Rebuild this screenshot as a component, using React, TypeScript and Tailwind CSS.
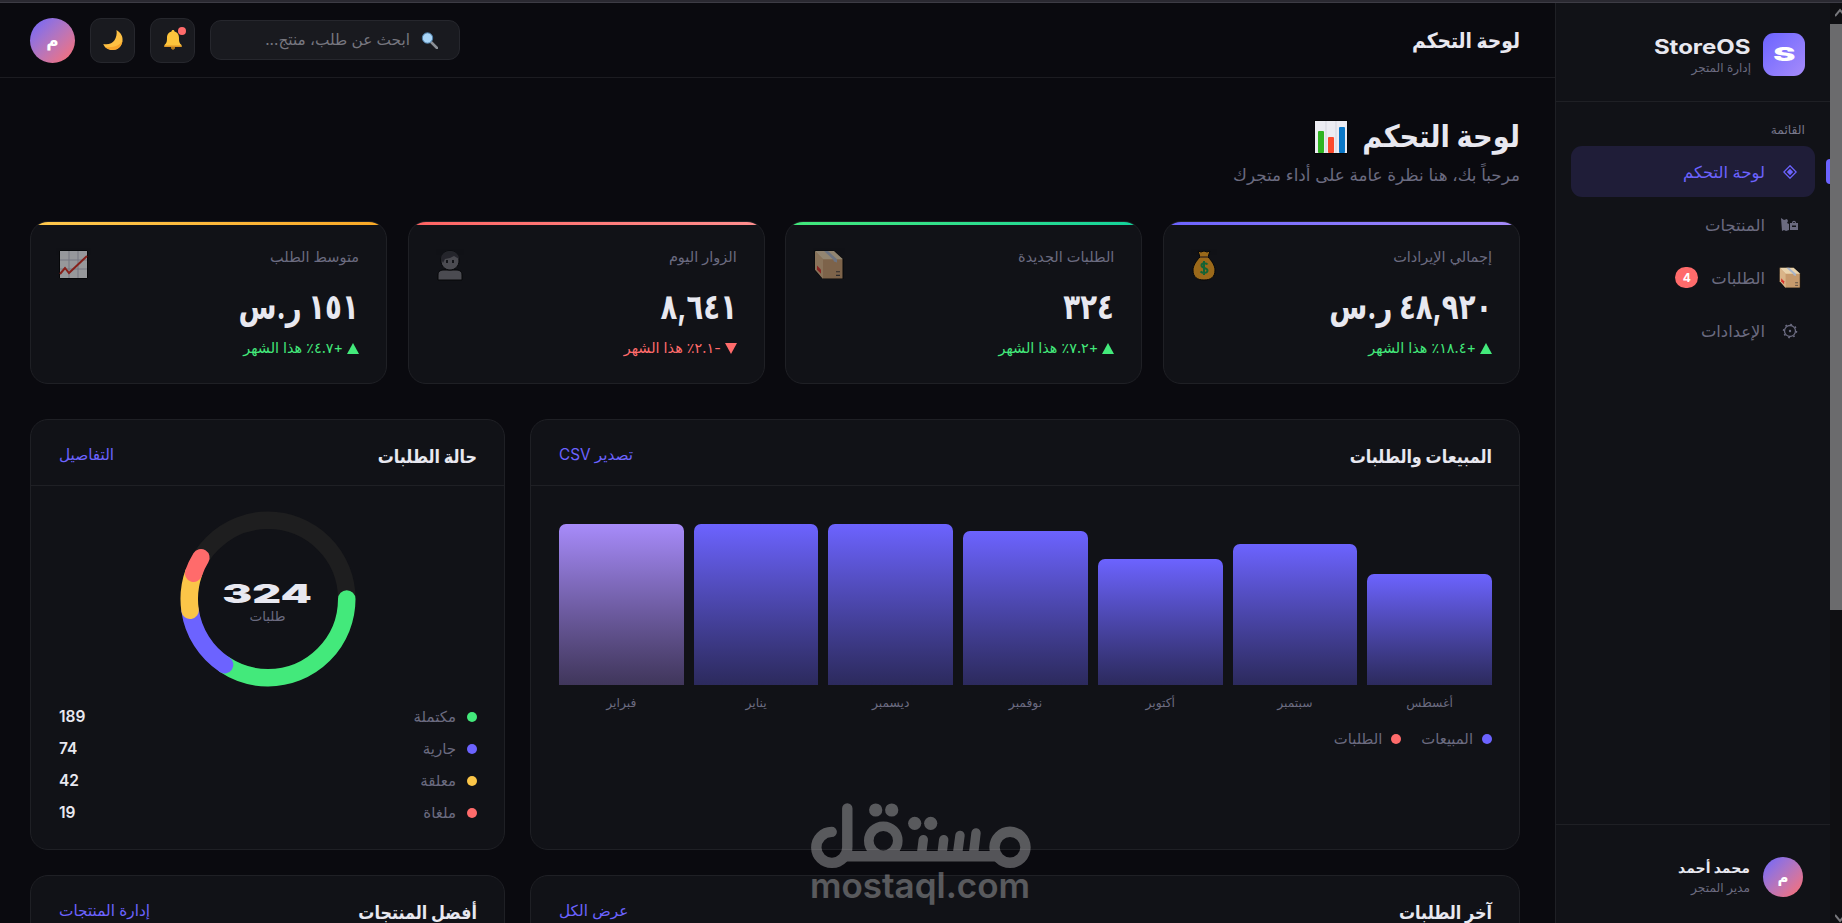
import type { ReactNode } from "react";

type Stat = {
  label: string;
  value: string;
  delta: string;
  up: boolean;
  bar: string;
  icon: ReactNode;
};

function BoxIcon({ className }: { className?: string }) {
  return (
    <svg viewBox="0 0 30 28" className={className} preserveAspectRatio="none">
      <path d="M1 1h19l9 8v19H9l-8-9z" fill="#c69a6d" stroke="#000" strokeWidth="1" />
      <path d="M1 1h19l9 8H9z" fill="#e9d3ad" />
      <path d="M1 1l8 8v19l-8-9z" fill="#d9b488" />
      <path d="M10 1h4l9 8v3l-3-1-1-2z" fill="#a9b4c9" />
      <path d="M3 15l4 4v4l-4-4z" fill="#d8322c" />
      <path d="M22 21h4M22 24.500h4" stroke="#3f3a3a" strokeWidth="1" />
    </svg>
  );
}

function MoneyIcon() {
  return (
    <svg viewBox="0 0 24 31" className="h-[31px] w-6">
      <path d="M6 1l3 1 3-1 3 1 3-1-2 6c4 4 7 9 7 13 0 7-4 10-11 10S1 27 1 20C1 16 4 11 8 7z" fill="#f7a31c" stroke="#000" strokeWidth="1" />
      <path d="M8 7h8" stroke="#8a5a1c" strokeWidth="2" />
      <path d="M15.500 14.500c-1-1.500-6-2-6 1s6 2 6 5-5 3-7 1M12 11v14" fill="none" stroke="#159a4a" strokeWidth="2" />
    </svg>
  );
}

function VisitorIcon() {
  return (
    <svg viewBox="0 0 26 31" className="h-[31px] w-[26px]">
      <path d="M1 30v-5c0-4 3-5 6-5h12c3 0 6 1 6 5v5z" fill="#727279" stroke="#000" />
      <path d="M4 11C4 4 8 1 13 1s9 3 9 10c0 5-4 9-9 9s-9-4-9-9z" fill="#727279" stroke="#000" />
      <path d="M4 9C4 4 8 1 13 1s9 3 9 8l-5-3-4 2-5 1-2 4z" fill="#33333a" />
      <path d="M10 10v3M16 10v3" stroke="#17171b" strokeWidth="2" />
    </svg>
  );
}

function TrendIcon() {
  return (
    <svg viewBox="0 0 29 29" className="size-[29px]">
      <path d="M.5.5h28v28H.5z" fill="#f1f1f4" stroke="#000" />
      <path d="M10 1v27M19 1v27M1 10h27M1 19h27" stroke="#b9b9c6" />
      <path d="M1 24l5-6 4 5L28 6" fill="none" stroke="#d42a1d" strokeWidth="2" />
    </svg>
  );
}

function ChartIcon() {
  return (
    <svg viewBox="0 0 34 34" className="mt-[2px] size-[34px]">
      <path d="M0 0h34v34H0z" fill="#050507" />
      <path d="M1 1h32v32H1z" fill="#ececf2" />
      <path d="M12 1v32M22 1v32" stroke="#d5d5df" />
      <rect x="4" y="11" width="6" height="22" rx="1" fill="#2fb421" />
      <rect x="14" y="17" width="6" height="16" rx="1" fill="#fb4a2d" />
      <rect x="25" y="7" width="6" height="26" rx="1" fill="#0a78c8" />
    </svg>
  );
}

const stats: Stat[] = [
  { label: "إجمالي الإيرادات", value: "٤٨,٩٢٠ ر.س", delta: "+١٨.٤٪ هذا الشهر", up: true, bar: "from-[#6c63ff] to-[#a78bfa]", icon: <MoneyIcon /> },
  { label: "الطلبات الجديدة", value: "٣٢٤", delta: "+٧.٢٪ هذا الشهر", up: true, bar: "from-[#43e97b] to-[#11d39b]", icon: <BoxIcon className="h-[29px] w-[30px]" /> },
  { label: "الزوار اليوم", value: "٨,٦٤١", delta: "-٢.١٪ هذا الشهر", up: false, bar: "from-[#ff6363] to-[#ff8f8f]", icon: <VisitorIcon /> },
  { label: "متوسط الطلب", value: "١٥١ ر.س", delta: "+٤.٧٪ هذا الشهر", up: true, bar: "from-[#ffc94d] to-[#f9a825]", icon: <TrendIcon /> },
];

const months = [
  { name: "أغسطس", height: 111 },
  { name: "سبتمبر", height: 141 },
  { name: "أكتوبر", height: 126 },
  { name: "نوفمبر", height: 154 },
  { name: "ديسمبر", height: 161 },
  { name: "يناير", height: 161 },
  { name: "فبراير", height: 161 },
];

const statuses = [
  { name: "مكتملة", count: 189, color: "#43e97b" },
  { name: "جارية", count: 74, color: "#6c63ff" },
  { name: "معلقة", count: 42, color: "#fbc548" },
  { name: "ملغاة", count: 19, color: "#ff6b6b" },
];

function Donut() {
  const r = 78.75;
  const unit = (2 * Math.PI * r * 0.653) / 360;
  let start = 0;
  return (
    <svg viewBox="0 0 176 176" className="size-[176px]">
      <circle cx="88" cy="88" r={r} fill="none" stroke="#1e1e1f" strokeWidth="17.5" />
      {statuses.map((s) => {
        const angle = start * 0.653;
        start += s.count;
        return (
          <circle
            key={s.name}
            cx="88"
            cy="88"
            r={r}
            fill="none"
            stroke={s.color}
            strokeWidth="17.5"
            strokeLinecap="round"
            strokeDasharray={`${s.count * unit} 1000`}
            transform={`rotate(${angle} 88 88)`}
          />
        );
      })}
    </svg>
  );
}

function StatCard({ stat }: { stat: Stat }) {
  return (
    <div className="h-[163px] overflow-hidden rounded-[18px] border border-[#1f2025] bg-[#111217]">
      <div className={`h-[3px] bg-linear-to-r ${stat.bar}`} />
      <div className="flex justify-between pt-[21px] pr-[27px] pl-7">
        <div>
          <p className="h-[22px] text-[14.5px] leading-[22px] text-[#6b6b80]">{stat.label}</p>
          <p className="mt-[17px] h-[42px] origin-right scale-x-[0.92] scale-y-[1.18] text-[30px] leading-[42px] font-bold whitespace-nowrap">{stat.value}</p>
          <p className={`mt-[11px] flex h-5 items-center gap-1 text-[14.4px] whitespace-nowrap ${stat.up ? "text-[#43e97b]" : "text-[#ff6b6b]"}`}>
            <svg viewBox="0 0 12 11" className={stat.up ? "h-[11px] w-3" : "h-[11px] w-3 rotate-180"}>
              <path d="M6 0l6 11H0z" fill="currentColor" />
            </svg>
            {stat.delta}
          </p>
        </div>
        <div className="pt-[4px] opacity-60">{stat.icon}</div>
      </div>
    </div>
  );
}

function Card({ title, link, className, children }: { title: string; link: string; className?: string; children?: ReactNode }) {
  return (
    <section className={`rounded-[18px] border border-[#1f2025] bg-[#111217] ${className}`}>
      <div className="flex h-[66px] items-center justify-between border-b border-[#1f2025] pt-[6px] pr-[27px] pl-7">
        <h2 className="scale-y-[1.15] text-[16px] font-bold">{title}</h2>
        <a className="text-[15.3px] text-[#6c63ff]">{link}</a>
      </div>
      {children}
    </section>
  );
}

function NavItem({ icon, label, active, badge }: { icon: ReactNode; label: string; active?: boolean; badge?: string }) {
  return (
    <div className={`relative flex h-[51px] items-center rounded-[11px] ${active ? "bg-[#1f1d38] text-[#6c63ff]" : "text-[#6b6b80]"}`}>
      {active && <span className="absolute -right-[15px] h-[25px] w-1 rounded-l-sm bg-[#6c63ff]" />}
      <span className="mr-[14px] flex w-[23px] justify-center">{icon}</span>
      <span className="mr-[13px] pt-[2px] text-[16.4px]">{label}</span>
      {badge && (
        <span className="mr-[13px] flex h-[21px] w-[23px] items-center justify-center rounded-full bg-[#ff6b6b] text-[12px] font-bold text-white">
          {badge}
        </span>
      )}
    </div>
  );
}

function Sidebar() {
  return (
    <aside className="flex w-[275px] shrink-0 flex-col border-l border-[#1f2025] bg-[#111217]">
      <div className="flex h-[99px] items-start border-b border-[#1f2025] pt-[30px] pr-[25px]">
        <div className="flex h-[43px] w-[42px] items-center justify-center rounded-[11px] bg-linear-to-br from-[#6c63ff] to-[#a78bfa] pt-[1px]">
          <span className="scale-x-[1.75] text-[19px] font-black text-white">S</span>
        </div>
        <div className="mr-[12px] pt-[2px]">
          <p className="origin-right scale-x-[1.2] text-[20px] leading-6 font-bold">StoreOS</p>
          <p className="text-[12px] leading-[17px] text-[#6b6b80]">إدارة المتجر</p>
        </div>
      </div>
      <div className="flex flex-1 flex-col gap-[2px] px-[15px] pt-[17px]">
        <p className="mr-[10px] h-[25px] text-[12.3px] leading-[22px] text-[#77778a]">القائمة</p>
        <NavItem
          active
          label="لوحة التحكم"
          icon={
            <svg viewBox="0 0 14 14" className="size-[14px]">
              <path d="M7 .8L13.200 7 7 13.200.8 7z" fill="none" stroke="currentColor" strokeWidth="1.300" />
              <path d="M7 3.800L10.200 7 7 10.200 3.800 7z" fill="currentColor" />
            </svg>
          }
        />
        <NavItem
          label="المنتجات"
          icon={
            <svg viewBox="0 0 17 13" className="h-[13px] w-[17px]" fill="currentColor">
              <path d="M0 0l3 2 3-1 1 2-1 2 2 1v6l-3 1-2-1-2 1zM9 5h2c0-3 4-3 4 0h2v7H9zm3 0h2c0-1.500-2-1.500-2 0zM11 7.500v1.500h4V7.500z" fillRule="evenodd" />
            </svg>
          }
        />
        <NavItem label="الطلبات" badge="4" icon={<BoxIcon className="h-[21px] w-[22px]" />} />
        <NavItem
          label="الإعدادات"
          icon={
            <svg viewBox="0 0 16 16" className="size-4" fill="none" stroke="currentColor">
              <circle cx="8" cy="8" r="5.500" strokeWidth="1.300" />
              <circle cx="8" cy="8" r="6.600" strokeWidth="1.300" strokeDasharray="1.800 3.384" />
              <circle cx="8" cy="8" r="1.200" fill="currentColor" stroke="none" />
            </svg>
          }
        />
      </div>
      <div className="flex h-[99px] items-center border-t border-[#1f2025] pt-[5px] pr-[27px]">
        <Avatar className="size-10 text-[15px]" />
        <div className="mr-[13px] pt-[2px]">
          <p className="text-[14px] leading-5 font-bold">محمد أحمد</p>
          <p className="text-[12.2px] leading-5 text-[#6b6b80]">مدير المتجر</p>
        </div>
      </div>
    </aside>
  );
}

function Avatar({ className }: { className: string }) {
  return (
    <div className={`flex items-center justify-center rounded-full bg-linear-to-br from-[#6c63ff] to-[#ff6b6b] pt-1 font-bold text-white ${className}`}>
      م
    </div>
  );
}

function Topbar() {
  return (
    <header className="flex h-[75px] items-center justify-between border-b border-[#1c1c21] pr-[35px] pl-[30px]">
      <h1 className="scale-y-[1.12] pt-[2px] text-[18.7px] font-bold">لوحة التحكم</h1>
      <div className="flex items-center gap-[15px]">
        <div className="flex h-10 w-[250px] items-center rounded-[11px] border border-[#26272d] bg-[#191a1f] pr-[21px]">
          <svg viewBox="0 0 17 17" className="size-[17px]">
            <path d="M10 10l6 6" stroke="#8b8f96" strokeWidth="2.500" strokeLinecap="round" />
            <circle cx="6.500" cy="6" r="5.200" fill="#a9d5f7" stroke="#4d7ea8" strokeWidth="1" />
          </svg>
          <span className="mr-[11px] text-[15.3px] text-[#77777f]">ابحث عن طلب، منتج...</span>
        </div>
        <div className="relative flex size-[45px] items-center justify-center rounded-[11px] border border-[#26272d] bg-[#191a1f]">
          <svg viewBox="0 0 18 20" className="h-5 w-[18px]">
            <path d="M7 17h4v1.500L9 20l-2-1.500z" fill="#b5791a" />
            <path d="M9 0c1 0 1.500.6 1.500 1.500C14 2.500 15 5 15 8c0 4 .5 5 2.500 7v2H.500v-2C2.500 13 3 12 3 8c0-3 1-5.500 4.500-6.500C7.500.6 8 0 9 0z" fill="#fdc43c" />
            <path d="M.5 15.500h17V17H.5z" fill="#dd9526" />
          </svg>
          <span className="absolute top-2 right-2 size-2 rounded-full bg-[#ff6b6b]" />
        </div>
        <div className="flex size-[45px] items-center justify-center rounded-[11px] border border-[#26272d] bg-[#191a1f]">
          <svg viewBox="0 0 20 20" className="size-5">
            <path d="M13.500 0c5 3 6.500 7 6 11-1 6-5 9-10 9C5 20 1.500 17.500.3 14c9 2 14.500-5 13.200-14z" fill="#fdc043" />
            <path d="M19.500 11c-1 6-5 9-10 9-3 0-6-1.500-7.500-3 9 1 15-2 17.500-6z" fill="#f8a52c" />
          </svg>
        </div>
        <Avatar className="size-[45px] text-[17px]" />
      </div>
    </header>
  );
}

function Watermark() {
  return (
    <div dir="ltr" className="absolute top-[803px] left-[810px] w-[222px] text-white opacity-30">
      <svg viewBox="0 0 222 66" className="block h-[66px] w-[222px]" fill="none" stroke="currentColor" strokeWidth="10.400">
        <path d="M21.700 28.900A15.500 15.500 0 1 0 37.300 44V5.500" strokeLinecap="round" />
        <path d="M33 53.300h154" />
        <circle cx="73.300" cy="37.700" r="14.500" strokeWidth="9.600" />
        <circle cx="200" cy="44.300" r="15.500" />
        <path d="M113.300 36.700L111.500 51M133.700 36.700L132 51M150 32.400L147.500 51M166 30l-2.500 21" strokeWidth="9.400" strokeLinecap="round" />
        <g fill="currentColor" stroke="none">
          <circle cx="65.700" cy="7" r="6.600" />
          <circle cx="81.700" cy="7" r="6.600" />
          <circle cx="104.700" cy="20.300" r="6.600" />
          <circle cx="120.700" cy="20.300" r="6.600" />
        </g>
      </svg>
      <p className="-mt-[2px] text-[35px] leading-9 font-semibold">mostaql.com</p>
    </div>
  );
}

export default function App() {
  return (
    <div className="relative flex h-[923px] w-[1842px] flex-col overflow-hidden bg-[#0a0a0f] font-['Inter','DejaVu_Sans',sans-serif] text-[#e8e8f0]">
      <div className="h-[3px] shrink-0 border-b border-[#3d3c45] bg-[#2a2931]" />
      <div className="flex min-h-0 flex-1">
        <div dir="rtl" className="flex min-w-0 flex-1">
          <Sidebar />
          <div className="flex min-w-0 flex-1 flex-col">
            <Topbar />
            <main className="flex-1 overflow-hidden pt-[34px] pr-[35px] pl-[30px]">
              <div className="flex h-12 items-center gap-[14px]">
                <h2 className="scale-y-[1.12] pt-[2px] text-[27.3px] font-bold">لوحة التحكم</h2>
                <ChartIcon />
              </div>
              <p className="h-[61px] text-[16.8px] leading-[30px] text-[#6b6b80]">مرحباً بك، هنا نظرة عامة على أداء متجرك</p>
              <div className="grid grid-cols-4 gap-[20.5px]">
                {stats.map((s) => (
                  <StatCard key={s.label} stat={s} />
                ))}
              </div>
              <div className="mt-[35px] grid grid-cols-[990px_475px] gap-[25px]">
                <Card title="المبيعات والطلبات" link="تصدير CSV" className="h-[431px]">
                  <div className="flex h-[199px] items-end gap-[10px] pr-[27px] pl-7">
                    {months.map((m, i) => (
                      <div
                        key={m.name}
                        className={`flex-1 rounded-t-[7px] bg-linear-to-b ${i === 6 ? "from-[#a78bfa] to-[#40365b]" : "from-[#6c63ff] to-[#2c2a5d]"}`}
                        style={{ height: m.height }}
                      />
                    ))}
                  </div>
                  <div className="mt-[6px] flex gap-[10px] pr-[27px] pl-7 text-[12.3px] leading-6 text-[#6b6b80]">
                    {months.map((m) => (
                      <span key={m.name} className="flex-1 text-center">{m.name}</span>
                    ))}
                  </div>
                  <div className="mt-3 flex gap-5 pr-[27px] pl-7 text-[14.8px] leading-6 text-[#6b6b80]">
                    <span className="flex items-center gap-[9px]">
                      <i className="size-[10px] rounded-full bg-[#6c63ff]" />
                      المبيعات
                    </span>
                    <span className="flex items-center gap-[9px]">
                      <i className="size-[10px] rounded-full bg-[#ff6b6b]" />
                      الطلبات
                    </span>
                  </div>
                </Card>
                <Card title="حالة الطلبات" link="التفاصيل" className="h-[431px]">
                  <div className="relative mt-[25px] flex justify-center">
                    <Donut />
                    <div className="absolute inset-0 flex flex-col items-center pt-[70px]">
                      <b className="scale-x-[1.72] text-[26px] leading-[26px] font-black">324</b>
                      <span className="mt-[1px] text-[13.5px] leading-4 text-[#6b6b80]">طلبات</span>
                    </div>
                  </div>
                  <div className="mt-[14px] pr-[27px] pl-7">
                    {statuses.map((s) => (
                      <div key={s.name} className="flex h-8 items-center">
                        <i className="size-[10px] rounded-full" style={{ background: s.color }} />
                        <span className="mr-[11px] flex-1 text-[15px]">
                          <span className="text-[#6b6b80]">{s.name}</span>
                        </span>
                        <b className="text-[15.5px] font-semibold">{s.count}</b>
                      </div>
                    ))}
                  </div>
                </Card>
                <Card title="آخر الطلبات" link="عرض الكل" className="h-[300px]" />
                <Card title="أفضل المنتجات" link="إدارة المنتجات" className="h-[300px]" />
              </div>
            </main>
          </div>
        </div>
        <div className="flex w-3 flex-col items-end bg-[#0f0f12]">
          <svg viewBox="0 0 7 21" className="h-[21px] w-[7px]" fill="none" stroke="#77777b" strokeWidth="2">
            <path d="M0 13l5-6 5 6" />
          </svg>
          <div className="h-[586px] w-3 bg-[#6b6b6d]" />
          <svg viewBox="0 0 7 12" className="mt-auto h-3 w-[7px]" fill="none" stroke="#77777b" strokeWidth="2">
            <path d="M0 4l5 6 5-6" />
          </svg>
        </div>
      </div>
      <Watermark />
    </div>
  );
}
